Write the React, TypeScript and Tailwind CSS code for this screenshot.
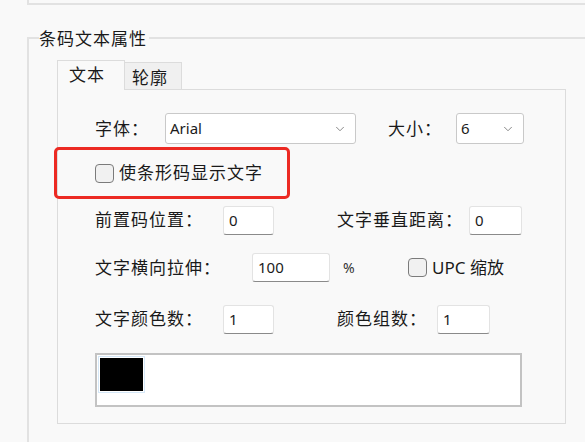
import { ChevronDown } from 'lucide-react';

const font = { fontFamily: '"Noto Sans", "Noto Sans CJK SC", sans-serif' };

const TextBox = ({ value, w }: { value: string; w: string }) => (
  <div
    className={`${w} h-[29px] bg-white border border-[#e3e3e3] border-b-[#8a8a8a] rounded-[3px] flex items-center pl-[5px] text-[15px] tracking-normal text-[#1b1b1b]`}
  >
    {value}
  </div>
);

const Select = ({ value, w }: { value: string; w: string }) => (
  <div
    className={`${w} h-[31px] bg-white border border-[#c9c9c9] rounded-[3px] flex items-center justify-between pl-[4px] pr-[8px] text-[15px] tracking-normal text-[#1b1b1b]`}
  >
    <span>{value}</span>
    <ChevronDown className="h-[14px] w-[14px] text-[#707070]" strokeWidth={1.4} />
  </div>
);

const Check = () => (
  <div className="w-[19px] h-[19px] rounded-[4px] border-[1.5px] border-[#7b7b7b] bg-[#f1f1f1] flex-shrink-0" />
);

export default function App() {
  return (
    <div className="w-[585px] h-[442px] overflow-hidden bg-[#f9f9f9] text-[#1a1a1a]" style={font}>
      {/* panel above */}
      <div className="ml-[27px] h-[5px] border-l-2 border-b-2 border-[#e2e2e2]" />

      {/* group box */}
      <div className="ml-[27px] mt-[32px] border-l-2 border-t-2 border-[#e2e2e2] h-[420px]">
        <div className="-mt-[11px] ml-[10px] h-[22px] flex">
          <span className="bg-[#f9f9f9] pr-[2px] text-[17px] tracking-[1px] leading-[22px]">条码文本属性</span>
        </div>

        {/* tabs */}
        <div className="ml-[28px] mt-[10px] flex items-end">
          <div className="w-[68px] h-[30px] border border-b-0 border-[#dcdcdc] bg-[#f9f9f9] pl-[11px] text-[17px] tracking-[1px] leading-[28px] relative z-10 -mb-px">
            文本
          </div>
          <div className="w-[57px] h-[27px] border border-l-0 border-b-0 border-[#dcdcdc] bg-[#f0f0f0] pl-[7px] text-[17px] tracking-[1px] leading-[30px]">
            轮廓
          </div>
        </div>

        {/* tab page */}
        <div className="ml-[28px] w-[509px] h-[335px] border border-[#dcdcdc] pl-[37px] text-[17px] tracking-[1px]">
          <div className="mt-[23px] h-[31px] flex items-center">
            <span className="w-[70px]">字体：</span>
            <Select value="Arial" w="w-[191px]" />
            <span className="ml-[32px] w-[68px]">大小：</span>
            <Select value="6" w="w-[68px]" />
          </div>

          <div className="h-[58px] flex items-center relative">
            <Check />
            <span className="ml-[5px]">使条形码显示文字</span>
            <div className="absolute left-[-41px] top-[3px] w-[236px] h-[52px] border-[3px] border-[#ec2a23] rounded-[5px]" />
          </div>

          <div className="h-[36px] flex items-center">
            <span className="w-[128px]">前置码位置：</span>
            <TextBox value="0" w="w-[51px]" />
            <span className="ml-[63px] w-[132px]">文字垂直距离：</span>
            <TextBox value="0" w="w-[53px]" />
          </div>

          <div className="h-[59px] flex items-center">
            <span className="w-[157px]">文字横向拉伸：</span>
            <TextBox value="100" w="w-[78px]" />
            <span className="ml-[13px] w-[65px] text-[14px] text-[#333]">%</span>
            <Check />
            <span className="ml-[5px] tracking-normal">UPC 缩放</span>
          </div>

          <div className="h-[44px] flex items-center">
            <span className="w-[128px]">文字颜色数：</span>
            <TextBox value="1" w="w-[51px]" />
            <span className="ml-[63px] w-[100px]">颜色组数：</span>
            <TextBox value="1" w="w-[53px]" />
          </div>

          <div className="mt-[12px] w-[427px] h-[54px] bg-white border-2 border-[#c3c3c3] pl-[1px] pt-[1px]">
            <div className="w-[47px] h-[37px] border border-[#d5e8f8] p-[1px]">
              <div className="w-full h-full bg-black" />
            </div>
          </div>
        </div>
      </div>
    </div>
  );
}
